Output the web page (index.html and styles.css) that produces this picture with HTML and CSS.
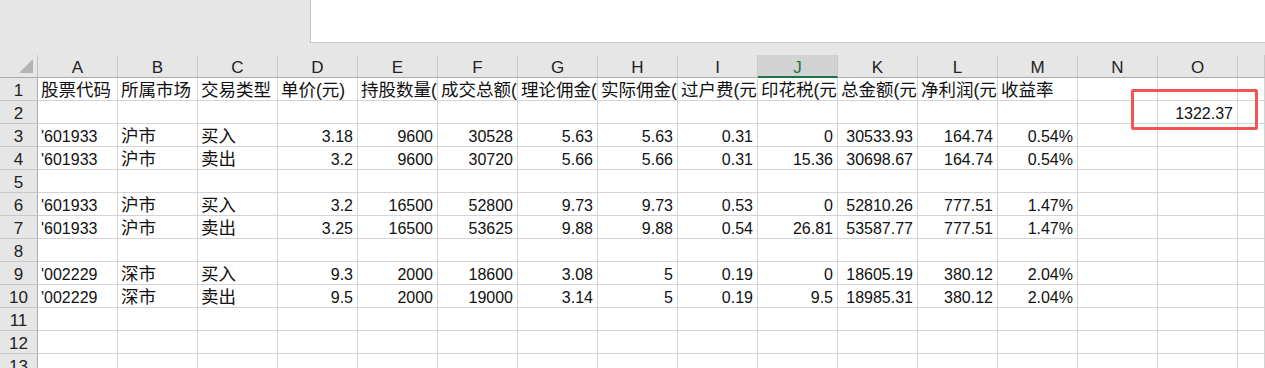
FILE: index.html
```html
<!DOCTYPE html>
<html lang="zh-CN">
<head>
<meta charset="utf-8">
<title>Sheet</title>
<link rel="stylesheet" href="styles.css">
</head>
<body>
<div class="app">
  <div class="topbar">
    <div class="formula"></div>
  </div>
  <div class="sheet">
    <div class="corner"><svg width="14" height="14" viewBox="0 0 14 14"><polygon points="14,0 14,14 0,14" fill="#b3b3b3"/></svg></div>
    <div class="ch">A</div><div class="ch">B</div><div class="ch">C</div><div class="ch">D</div><div class="ch">E</div><div class="ch">F</div><div class="ch">G</div><div class="ch">H</div><div class="ch">I</div><div class="ch sel">J</div><div class="ch">K</div><div class="ch">L</div><div class="ch">M</div><div class="ch">N</div><div class="ch">O</div><div class="ch"></div>

    <div class="rh">1</div>
    <div class="c zh">股票代码</div><div class="c zh">所属市场</div><div class="c zh">交易类型</div><div class="c zh">单价(元)</div><div class="c zh">持股数量(</div><div class="c zh">成交总额(</div><div class="c zh">理论佣金(</div><div class="c zh">实际佣金(</div><div class="c zh">过户费(元</div><div class="c zh">印花税(元</div><div class="c zh">总金额(元</div><div class="c zh">净利润(元</div><div class="c zh">收益率</div><div class="c"></div><div class="c"></div><div class="c"></div>

    <div class="rh">2</div>
    <div class="c"></div><div class="c"></div><div class="c"></div><div class="c"></div><div class="c"></div><div class="c"></div><div class="c"></div><div class="c"></div><div class="c"></div><div class="c"></div><div class="c"></div><div class="c"></div><div class="c"></div><div class="c"></div><div class="c n">1322.37</div><div class="c"></div>

    <div class="rh">3</div>
    <div class="c t">'601933</div><div class="c zh">沪市</div><div class="c zh">买入</div><div class="c n">3.18</div><div class="c n">9600</div><div class="c n">30528</div><div class="c n">5.63</div><div class="c n">5.63</div><div class="c n">0.31</div><div class="c n">0</div><div class="c n">30533.93</div><div class="c n">164.74</div><div class="c n">0.54%</div><div class="c"></div><div class="c"></div><div class="c"></div>

    <div class="rh">4</div>
    <div class="c t">'601933</div><div class="c zh">沪市</div><div class="c zh">卖出</div><div class="c n">3.2</div><div class="c n">9600</div><div class="c n">30720</div><div class="c n">5.66</div><div class="c n">5.66</div><div class="c n">0.31</div><div class="c n">15.36</div><div class="c n">30698.67</div><div class="c n">164.74</div><div class="c n">0.54%</div><div class="c"></div><div class="c"></div><div class="c"></div>

    <div class="rh">5</div>
    <div class="c"></div><div class="c"></div><div class="c"></div><div class="c"></div><div class="c"></div><div class="c"></div><div class="c"></div><div class="c"></div><div class="c"></div><div class="c"></div><div class="c"></div><div class="c"></div><div class="c"></div><div class="c"></div><div class="c"></div><div class="c"></div>

    <div class="rh">6</div>
    <div class="c t">'601933</div><div class="c zh">沪市</div><div class="c zh">买入</div><div class="c n">3.2</div><div class="c n">16500</div><div class="c n">52800</div><div class="c n">9.73</div><div class="c n">9.73</div><div class="c n">0.53</div><div class="c n">0</div><div class="c n">52810.26</div><div class="c n">777.51</div><div class="c n">1.47%</div><div class="c"></div><div class="c"></div><div class="c"></div>

    <div class="rh">7</div>
    <div class="c t">'601933</div><div class="c zh">沪市</div><div class="c zh">卖出</div><div class="c n">3.25</div><div class="c n">16500</div><div class="c n">53625</div><div class="c n">9.88</div><div class="c n">9.88</div><div class="c n">0.54</div><div class="c n">26.81</div><div class="c n">53587.77</div><div class="c n">777.51</div><div class="c n">1.47%</div><div class="c"></div><div class="c"></div><div class="c"></div>

    <div class="rh">8</div>
    <div class="c"></div><div class="c"></div><div class="c"></div><div class="c"></div><div class="c"></div><div class="c"></div><div class="c"></div><div class="c"></div><div class="c"></div><div class="c"></div><div class="c"></div><div class="c"></div><div class="c"></div><div class="c"></div><div class="c"></div><div class="c"></div>

    <div class="rh">9</div>
    <div class="c t">'002229</div><div class="c zh">深市</div><div class="c zh">买入</div><div class="c n">9.3</div><div class="c n">2000</div><div class="c n">18600</div><div class="c n">3.08</div><div class="c n">5</div><div class="c n">0.19</div><div class="c n">0</div><div class="c n">18605.19</div><div class="c n">380.12</div><div class="c n">2.04%</div><div class="c"></div><div class="c"></div><div class="c"></div>

    <div class="rh">10</div>
    <div class="c t">'002229</div><div class="c zh">深市</div><div class="c zh">卖出</div><div class="c n">9.5</div><div class="c n">2000</div><div class="c n">19000</div><div class="c n">3.14</div><div class="c n">5</div><div class="c n">0.19</div><div class="c n">9.5</div><div class="c n">18985.31</div><div class="c n">380.12</div><div class="c n">2.04%</div><div class="c"></div><div class="c"></div><div class="c"></div>

    <div class="rh">11</div>
    <div class="c"></div><div class="c"></div><div class="c"></div><div class="c"></div><div class="c"></div><div class="c"></div><div class="c"></div><div class="c"></div><div class="c"></div><div class="c"></div><div class="c"></div><div class="c"></div><div class="c"></div><div class="c"></div><div class="c"></div><div class="c"></div>

    <div class="rh">12</div>
    <div class="c"></div><div class="c"></div><div class="c"></div><div class="c"></div><div class="c"></div><div class="c"></div><div class="c"></div><div class="c"></div><div class="c"></div><div class="c"></div><div class="c"></div><div class="c"></div><div class="c"></div><div class="c"></div><div class="c"></div><div class="c"></div>

    <div class="rh">13</div>
    <div class="c"></div><div class="c"></div><div class="c"></div><div class="c"></div><div class="c"></div><div class="c"></div><div class="c"></div><div class="c"></div><div class="c"></div><div class="c"></div><div class="c"></div><div class="c"></div><div class="c"></div><div class="c"></div><div class="c"></div><div class="c"></div>

    <div class="mark"></div>
  </div>
</div>
</body>
</html>
```

FILE: styles.css
```css
* { box-sizing: border-box; }
html, body { margin: 0; padding: 0; }
body {
  width: 1265px;
  height: 368px;
  overflow: hidden;
  background: #e6e6e6;
  font-family: "Liberation Sans", "Noto Sans CJK SC", sans-serif;
  color: #1a1a1a;
}
.app { display: flex; flex-direction: column; }
.topbar {
  height: 55px;
  display: flex;
  justify-content: flex-end;
  align-items: flex-start;
}
.formula {
  width: 955px;
  height: 43px;
  background: #fff;
  border-left: 1px solid #c6c6c6;
  border-bottom: 1px solid #c6c6c6;
}
.sheet {
  position: relative;
  display: grid;
  grid-template-columns: 38px repeat(15, 80px) 1fr;
  grid-auto-rows: 23px;
  background: #fff;
}
.corner {
  background: #e6e6e6;
  border-right: 1px solid #c0c0c0;
  border-bottom: 1px solid #ababab;
  display: flex;
  justify-content: flex-end;
  align-items: flex-end;
  padding: 0 4px 4px 0;
}
.ch {
  background: #e6e6e6;
  border-right: 1px solid #c8c8c8;
  border-bottom: 1px solid #ababab;
  text-align: center;
  font-size: 17px;
  line-height: 21px;
  padding-top: 2px;
  color: #222;
}
.ch.sel {
  background: #d3d3d3;
  color: #217346;
  border-bottom: 2px solid #217346;
}
.rh {
  background: #e6e6e6;
  border-right: 1px solid #ababab;
  border-bottom: 1px solid #c8c8c8;
  text-align: center;
  font-size: 17px;
  line-height: 21px;
  padding-top: 2px;
  color: #222;
}
.c {
  border-right: 1px solid #d4d4d4;
  border-bottom: 1px solid #d4d4d4;
  font-size: 16px;
  line-height: 21px;
  padding: 2px 3px 0 3px;
  white-space: nowrap;
  overflow: hidden;
  color: #111;
}
.c.zh {
  font-size: 17.5px;
  padding-left: 3px;
  padding-right: 0;
}
.c.t { text-align: left; }
.c.n { text-align: right; padding-right: 4px; }
.mark {
  position: absolute;
  left: 1131px;
  top: 34px;
  width: 127px;
  height: 41px;
  border: 3px solid #f55353;
  border-radius: 2px;
}
```
